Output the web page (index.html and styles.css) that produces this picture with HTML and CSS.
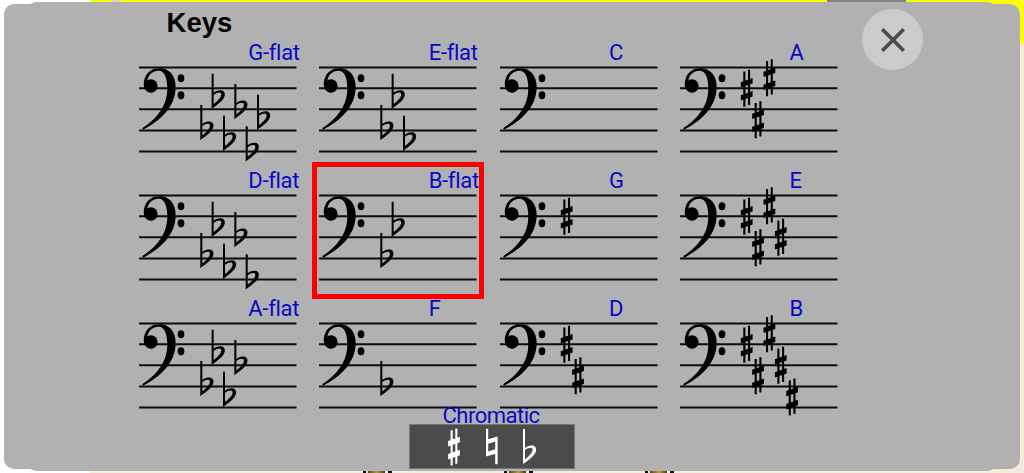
FILE: index.html
```
<!DOCTYPE html>
<html>
<head>
    <meta charset="utf-8">
    <title>Keys</title>
    <link rel="stylesheet" href="styles.css">
</head>
<body>

<svg class="defs">
    <symbol id="staff" viewBox="0 0 158 100" overflow="visible">
        <path d="M0 10.5H157.5M0 31.2H157.5M0 52.3H157.5M0 73.6H157.5M0 94.5H157.5" stroke="#0c0c0c" stroke-width="2"/>
        <g transform="translate(-9 -2) scale(.3333)">
            <path d="M37 219C70 199 112 159 112 102C112 68 104 47 85 47C68 47 53 60 52 80L46 104C40 96 40 79 45 68C52 50 68 40 89 40C118 40 137 62 137 96C137 155 91 198 39 224Z"/>
            <circle cx="63" cy="93" r="20"/>
            <ellipse cx="153" cy="70" rx="10" ry="12"/>
            <ellipse cx="153" cy="121" rx="10" ry="12"/>
        </g>
    </symbol>
    <symbol id="flat" viewBox="0 0 13 35" overflow="visible">
        <path fill-rule="evenodd" d="M-1 0H1V18.9C3 17.1 6 16 8.9 16.6C11.5 17.2 12.6 19.4 12 22C10.9 26.8 5 30.8-1 35.2ZM1 21.3V30.4C4.5 27.5 7.8 24.8 8.5 21.8C9 19.6 8 18.7 6.3 18.7C4.3 18.7 2.3 19.7 1 21.3Z"/>
    </symbol>
    <symbol id="sharp" viewBox="0 0 12 37" overflow="visible">
        <path d="M-3.4-16.7H-1.3V18.5H-3.4ZM1.3-18.5H3.4V16.7H1.3ZM-5.9-6L5.9-10.3V-4.8L-5.9-.6ZM-5.9 7L5.9 2.8V8.2L-5.9 12.4Z"/>
    </symbol>
</svg>

<div class="page-top"><span class="logo"></span><span class="tab"></span></div>
<div class="valves"><i></i><i></i><i></i></div>

<div class="panel">
    <h1>Keys</h1>
    <button class="close">
        <svg width="24" height="24" viewBox="0 0 24 24"><path d="M1.3 1.3L22.7 22.7M22.7 1.3L1.3 22.7"/></svg>
    </button>

    <div class="keys" id="keys"></div>

    <div class="chromatic">
        <span>Chromatic</span>
        <div class="accidentals">
            <svg width="164" height="42" viewBox="0 0 164 42">
                <use href="#sharp" x="44" y="22" width="12" height="37"/>
                <path fill-rule="evenodd" d="M76 3.7H78.2V14.2L87.6 11.5V39.3H85.2V28.9L76 31.6ZM78.2 18.8V26.4L85.2 24.2V16.6Z"/>
                <use href="#flat" x="114" y="4" width="13" height="35"/>
            </svg>
        </div>
    </div>
</div>

<script>
    const keys = [
        ["G-flat", "flat", 6], ["E-flat", "flat", 3], ["C", "", 0], ["A", "sharp", 3],
        ["D-flat", "flat", 5], ["B-flat", "flat", 2], ["G", "sharp", 1], ["E", "sharp", 4],
        ["A-flat", "flat", 4], ["F", "flat", 1], ["D", "sharp", 2], ["B", "sharp", 5]
    ];
    const selected = "B-flat";

    // height of each accidental on the staff, in the order they are written
    const heights = {
        flat: [48, 16.7, 58.7, 27, 69.2, 37.7],
        sharp: [31.2, 62.7, 20.7, 52.2, 84]
    };
    const size = { flat: [62.3, 13, 35], sharp: [66.7, 12, 37] };

    document.getElementById("keys").innerHTML = keys.map(([name, type, count]) => {
        let marks = "";
        for (let i = 0; i < count; i++) {
            const [start, w, h] = size[type];
            marks += `<use href="#${type}" x="${start + i * 11.35}" y="${heights[type][i]}" width="${w}" height="${h}"/>`;
        }
        return `<div class="key${name == selected ? " selected" : ""}">
            <span class="name">${name}</span>
            <svg class="staff" width="158" height="100" viewBox="0 0 158 100">
                <use href="#staff" width="158" height="100"/>${marks}
            </svg>
        </div>`;
    }).join("");
</script>

</body>
</html>
```
FILE: styles.css
```
* {
    box-sizing: border-box;
}
body {
    margin: 0;
    height: 473px;
    position: relative;
    overflow: hidden;
    font-family: Roboto, sans-serif;
    background: linear-gradient(to right, #fff 90px, #f5ecdc 90px);
}
.defs {
    position: absolute;
    width: 0;
    height: 0;
}
.page-top {
    height: 44px;
    margin-left: 90px;
    background: #ff0;
    position: relative;
}
.logo {
    position: absolute;
    left: 17px;
    top: 0;
    width: 18px;
    height: 8px;
    border-radius: 9px 9px 0 0;
    background: #d4d0c4;
}
.tab {
    position: absolute;
    left: 737px;
    top: 0;
    width: 79px;
    height: 4px;
    background: #808080;
}
.valves {
    position: absolute;
    left: 363px;
    bottom: 0;
    display: flex;
    gap: 112px;
}
.valves i {
    width: 29px;
    height: 3px;
    background: linear-gradient(to right, #111 3px, #ddd 3px 5px, #5c4612 5px, #b89a45 14px, #4e3b0d 22px, #eee 22px 25px, #111 25px);
}
.panel {
    position: absolute;
    left: 4px;
    top: 4px;
    width: 1016px;
    height: 465px;
    border-radius: 10px;
    background: #b1b1b1;
}
.panel::before {
    content: "";
    position: absolute;
    inset: -2px 18px -2px 18px;
    border-radius: 16px;
    background: #b1b1b1;
}
h1 {
    position: relative;
    margin: 0 0 0 162.6px;
    height: 36px;
    font-family: "Liberation Sans", Arial, sans-serif;
    font-size: 27.5px;
    line-height: 37px;
}
.close {
    position: absolute;
    left: 858px;
    top: 5px;
    width: 61px;
    height: 61px;
    padding: 0;
    border: none;
    border-radius: 50%;
    background: #cbcbcb;
    display: flex;
    align-items: center;
    justify-content: center;
}
.close path {
    stroke: #4a4a4a;
    stroke-width: 3.6;
}
.keys {
    position: relative;
    margin-left: 135px;
    display: grid;
    grid-template-columns: repeat(4, 158px);
    grid-auto-rows: 128px;
    column-gap: 22.4px;
}
.key {
    position: relative;
}
.name {
    display: block;
    height: 17px;
    margin-left: 109.3px;
    font-size: 22px;
    line-height: 25px;
    letter-spacing: -0.3px;
    color: #0808c8;
    white-space: nowrap;
}
.staff {
    display: block;
    overflow: visible;
}
.selected::after {
    content: "";
    position: absolute;
    left: -7px;
    top: -6px;
    width: 172px;
    height: 137px;
    box-sizing: border-box;
    border: 5px solid #f00;
}
.chromatic {
    position: absolute;
    left: 405px;
    top: 399px;
    width: 166px;
    display: flex;
    flex-direction: column;
    align-items: center;
    font-size: 22px;
    line-height: 25px;
    letter-spacing: -0.5px;
    color: #0808c8;
}
.chromatic span {
    height: 21px;
    margin-left: -2px;
}
.accidentals {
    width: 166px;
    height: 45px;
    border: 1px solid #777;
    background: #4b4b4b;
    fill: #fff;
}
```
